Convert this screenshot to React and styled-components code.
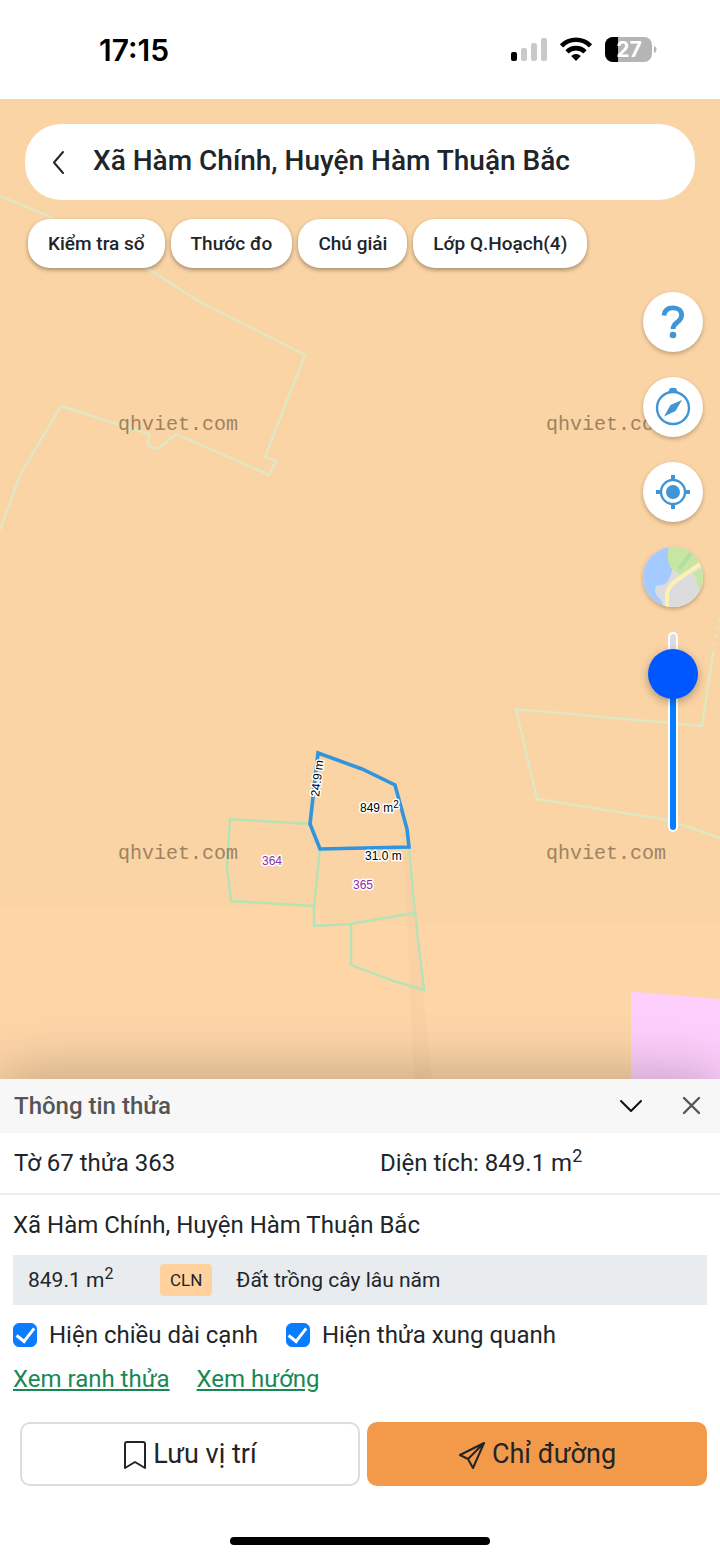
import React, { useState } from 'react';
import styled, { createGlobalStyle } from 'styled-components';

const CHIPS = ['Kiểm tra sổ', 'Thước đo', 'Chú giải', 'Lớp Q.Hoạch(4)'];

const WATERMARKS = [
	[118, 430],
	[546, 430],
	[118, 859],
	[546, 859],
];

const StatusIcons = () => (
	<svg width='148' height='28' viewBox='0 0 148 28' role='img' aria-label='Pin 27%'>
		<rect x='1' y='16' width='6' height='9' rx='2' fill='#000' />
		<rect x='11' y='12' width='6' height='13' rx='2' fill='#c9c9c9' />
		<rect x='21' y='7' width='6' height='18' rx='2' fill='#c9c9c9' />
		<rect x='31' y='2' width='6' height='23' rx='2' fill='#c9c9c9' />
		<g fill='none' stroke='#000' strokeWidth='4.6'>
			<path d='M51.5 9.800a20.500 20.500 0 0 1 29 0' />
			<path d='M57 15.800a12.800 12.800 0 0 1 18 0' />
		</g>
		<path d='M66 25l-4.800-4.900a6.800 6.800 0 0 1 9.600 0z' />
		<clipPath id='battery'>
			<rect x='95' y='1' width='47' height='25' rx='8' />
		</clipPath>
		<g clipPath='url(#battery)'>
			<rect x='95' y='1' width='47' height='25' fill='#b5b5b5' />
			<rect x='95' y='1' width='13' height='25' fill='#000' />
		</g>
		<path d='M144 10q2.600 1 2.600 3.500t-2.600 3.500z' fill='#b5b5b5' />
		<text x='119' y='21' textAnchor='middle' fontFamily='Inter, sans-serif' fontSize='21' fontWeight='700' fill='#fff'>
			27
		</text>
	</svg>
);

const ParcelMap = () => (
	<MapCanvas viewBox='0 99 720 980' preserveAspectRatio='xMidYMid slice' role='img' aria-label='Bản đồ thửa đất'>
		<rect y='99' width='720' height='980' fill='#fad4a4' />
		<path d='M0 906H320V922H720V1079H0z' fill='#fdd5a7' />
		<path d='M408 849L432 1079H414L404 849z' fill='#f6cfa2' opacity='0.7' />
		<path d='M631 991.500L720 999V1079H631z' fill='#fdcffc' />
		<g fill='none' stroke='#dfe8c4' strokeWidth='2.4'>
			<path d='M0 196L44 214L150 270L200 302L305 355L288 398L265 457L276 461L269 475L176 434L158 449L148 446L149 434L61 406L20 475L0 530' />
			<path d='M720 838L668 820L537 799L516 709L702 726L713 654' />
			<path d='M713 654L720 615' strokeDasharray='3 5' />
		</g>
		<g fill='none' stroke='#b5e3b5' strokeWidth='2.4'>
			<path d='M310 824L230 819L227 868L231 901L314 906' />
			<path d='M320 849L314 906V926L350 924L415 913L409 848' />
			<path d='M415 913L424 990L394 981L351 965V924' />
		</g>
		<path
			d='M318 753L362 769L395 785L407 829L409 847L320 849L310 824z'
			fill='none'
			stroke='#3194de'
			strokeWidth='3.6'
		/>
		{WATERMARKS.map(([x, y]) => (
			<Watermark key={`${x}-${y}`} x={x} y={y}>
				qhviet.com
			</Watermark>
		))}
		<MapLabel x='360' y='812'>
			849 m
			<tspan fontSize='10' dy='-4'>
				2
			</tspan>
		</MapLabel>
		<MapLabel x='365' y='860'>
			31.0 m
		</MapLabel>
		<MapLabel transform='translate(319 797) rotate(-83)'>24.9 m</MapLabel>
		<MapLabel x='262' y='865' $neighbour>
			364
		</MapLabel>
		<MapLabel x='353' y='889' $neighbour>
			365
		</MapLabel>
	</MapCanvas>
);

const App = () => {
	const [opacity, setOpacity] = useState(90);
	const [showEdges, setShowEdges] = useState(true);
	const [showNeighbours, setShowNeighbours] = useState(true);

	return (
		<Page>
			<GlobalStyle />
			<StatusBar>
				<Clock>17:15</Clock>
				<StatusIcons />
			</StatusBar>

			<MapArea>
				<ParcelMap />
				<SearchBar>
					<IconButton aria-label='Quay lại'>
						<svg width='20' height='28' viewBox='0 0 20 28' fill='none' stroke='#212529' strokeWidth='2'>
							<path d='M14 4L5 14.500l9 10.500' strokeLinecap='round' strokeLinejoin='round' />
						</svg>
					</IconButton>
					<Title>Xã Hàm Chính, Huyện Hàm Thuận Bắc</Title>
				</SearchBar>
				<Chips>
					{CHIPS.map((label) => (
						<Chip key={label}>{label}</Chip>
					))}
				</Chips>
				<Controls>
					<RoundButton aria-label='Trợ giúp'>
						<svg width='36' height='36' viewBox='0 0 36 36' fill='none'>
							<path
								d='M9 11.500C9.500 6 13 3.800 18 3.800c5.500 0 8.600 3 8.600 7.400 0 3.600-2 5.400-4.600 7.300-3 2.200-3.900 3.600-3.900 6.500'
								stroke='#3f95d6'
								strokeWidth='4.800'
							/>
							<circle cx='18' cy='31' r='3.300' fill='#3f95d6' />
						</svg>
					</RoundButton>
					<RoundButton aria-label='La bàn'>
						<svg width='38' height='38' viewBox='0 0 38 38'>
							<circle cx='19' cy='20' r='16' fill='none' stroke='#3f95d6' strokeWidth='2.400' />
							<path d='M14 5l1.500-4q.4-1 1.500-1h4q1.100 0 1.500 1L24 5q-5-1.500-10 0z' fill='#3f95d6' />
							<path d='M28 12L21.500 23 10 28.500 16.500 17z' fill='#3f95d6' />
						</svg>
					</RoundButton>
					<RoundButton aria-label='Vị trí của tôi'>
						<svg width='38' height='38' viewBox='0 0 38 38' fill='none' stroke='#3f95d6'>
							<circle cx='19' cy='19' r='12' strokeWidth='2.400' />
							<circle cx='19' cy='19' r='7' fill='#3f95d6' stroke='none' />
							<path d='M19 2v5M19 31v5M2 19h5M31 19h5' strokeWidth='4' />
						</svg>
					</RoundButton>
					<RoundButton aria-label='Loại bản đồ'>
						<svg width='60' height='60' viewBox='0 0 60 60'>
							<rect width='60' height='60' fill='#dcdcdc' />
							<path d='M0 0h26q-2 7 1 12 4 8 1 15-3 9-8 11-9-1-8 6 1 5 5 8 3 4 3 8H0z' fill='#a4caff' />
							<path d='M26 0h34v14L38 29q-5-5-10-8-5-8-2-21z' fill='#c5e7a1' />
							<path d='M60 20v24q-5-2-6-8t-4-9z' fill='#c5e7a1' />
							<path d='M36 22L49 5' stroke='#b4dea0' strokeWidth='4' />
							<path d='M60 15L34 33q-9 6-10 14v13' fill='none' stroke='#fdf0b3' strokeWidth='4' />
						</svg>
					</RoundButton>
					<OpacityRange
						type='range'
						aria-label='Độ mờ lớp quy hoạch'
						min='0'
						max='100'
						value={opacity}
						onChange={(e) => setOpacity(Number(e.target.value))}
						style={{ '--fill': `${opacity}%` }}
					/>
				</Controls>
			</MapArea>

			<Sheet>
				<SheetHeader>
					<SheetTitle>Thông tin thửa</SheetTitle>
					<IconButton aria-label='Thu gọn'>
						<svg width='26' height='26' viewBox='0 0 26 26' fill='none' stroke='#111' strokeWidth='2'>
							<path d='M3 8l10 10L23 8' strokeLinecap='round' strokeLinejoin='round' />
						</svg>
					</IconButton>
					<IconButton aria-label='Đóng'>
						<svg width='20' height='20' viewBox='0 0 20 20' fill='none' stroke='#555' strokeWidth='2.4'>
							<path d='M2 2l15 15M17 2L2 17' strokeLinecap='round' />
						</svg>
					</IconButton>
				</SheetHeader>
				<Summary>
					<span>Tờ 67 thửa 363</span>
					<span>
						Diện tích: 849.1 m<sup>2</sup>
					</span>
				</Summary>
				<Details>
					<Address>Xã Hàm Chính, Huyện Hàm Thuận Bắc</Address>
					<LandUse>
						<Area>
							849.1 m<sup>2</sup>
						</Area>
						<Badge>CLN</Badge>
						<span>Đất trồng cây lâu năm</span>
					</LandUse>
					<Options>
						<Option>
							<Checkbox type='checkbox' checked={showEdges} onChange={() => setShowEdges(!showEdges)} />
							Hiện chiều dài cạnh
						</Option>
						<Option>
							<Checkbox
								type='checkbox'
								checked={showNeighbours}
								onChange={() => setShowNeighbours(!showNeighbours)}
							/>
							Hiện thửa xung quanh
						</Option>
					</Options>
					<Links>
						<a href='#ranh-thua'>Xem ranh thửa</a>
						<a href='#huong'>Xem hướng</a>
					</Links>
					<Actions>
						<ActionButton>
							<svg width='24' height='30' viewBox='0 0 24 30' fill='none' stroke='#212529' strokeWidth='2'>
								<path d='M2 29V5q0-2 2-2h16q2 0 2 2v24l-10-6z' strokeLinejoin='round' />
							</svg>
							Lưu vị trí
						</ActionButton>
						<ActionButton $primary>
							<svg width='28' height='30' viewBox='0 0 28 30' fill='none' stroke='#212529' strokeWidth='2'>
								<path d='M26 4L2 16l8 4 5 9zM26 4L10 20' strokeLinejoin='round' />
							</svg>
							Chỉ đường
						</ActionButton>
					</Actions>
				</Details>
				<HomeBar />
			</Sheet>
		</Page>
	);
};

const GlobalStyle = createGlobalStyle`
	* {
		box-sizing: border-box;
	}
	body {
		margin: 0;
		background: #fff;
		color: #212529;
		font-family: Roboto, 'Noto Sans', sans-serif;
		font-size: 24px;
		line-height: 32px;
	}
	button {
		font: inherit;
		color: inherit;
		cursor: pointer;
	}
	svg {
		display: block;
		flex: none;
	}
	sup {
		font-size: 18px;
		line-height: 0;
	}
`;

const Page = styled.div`
	display: flex;
	flex-direction: column;
	min-height: 100vh;
`;

const StatusBar = styled.header`
	display: flex;
	align-items: center;
	justify-content: space-between;
	height: 99px;
	padding: 0 62px 0 99px;
	background: #fff;
`;

const Clock = styled.span`
	font-family: Inter, sans-serif;
	font-size: 30px;
	font-weight: 600;
	color: #000;
`;

const MapArea = styled.main`
	position: relative;
	display: flex;
	flex-direction: column;
	flex: 1;
	padding: 25px 25px 0;
`;

const MapCanvas = styled.svg`
	position: absolute;
	inset: 0;
	width: 100%;
	height: 100%;
`;

const Watermark = styled.text`
	font-family: 'Liberation Mono', monospace;
	font-size: 20px;
	fill: #80684c;
	opacity: 0.75;
`;

const MapLabel = styled.text`
	font-family: 'Liberation Sans', sans-serif;
	font-size: 12px;
	fill: ${({ $neighbour }) => ($neighbour ? '#8a2fa5' : '#000')};
	stroke: #fff;
	stroke-width: 3px;
	stroke-linejoin: round;
	paint-order: stroke;
`;

const IconButton = styled.button`
	display: flex;
	align-items: center;
	justify-content: center;
	padding: 0;
	border: 0;
	background: none;
`;

const SearchBar = styled.div`
	position: relative;
	display: flex;
	align-items: center;
	gap: 24px;
	height: 76px;
	padding: 0 24px;
	border-radius: 36px;
	background: #fff;
`;

const Title = styled.h1`
	margin: 0;
	padding-bottom: 2px;
	font-size: 28px;
	font-weight: 500;
	line-height: 36px;
`;

const Chips = styled.div`
	position: relative;
	display: flex;
	gap: 6px;
	margin: 19px 0 0 3px;
`;

const Chip = styled.button`
	height: 49px;
	padding: 0 20px;
	border: 0;
	border-radius: 22px;
	background: #fff;
	box-shadow: 0 2px 4px rgba(0, 0, 0, 0.35);
	font-size: 19px;
	font-weight: 500;
	line-height: 24px;
	white-space: nowrap;
`;

const Controls = styled.div`
	position: relative;
	display: flex;
	flex-direction: column;
	align-items: center;
	align-self: flex-end;
	gap: 25px;
	margin: 24px -8px 0 0;
`;

const RoundButton = styled.button`
	display: flex;
	align-items: center;
	justify-content: center;
	width: 60px;
	height: 60px;
	padding: 0;
	border: 0;
	border-radius: 50%;
	overflow: hidden;
	background: #fff;
	box-shadow: 0 2px 4px rgba(0, 0, 0, 0.25);
`;

const OpacityRange = styled.input`
	appearance: none;
	writing-mode: vertical-lr;
	direction: rtl;
	width: 50px;
	height: 200px;
	margin: 0;
	background: none;

	&::-webkit-slider-runnable-track {
		width: 10px;
		border: 2px solid #fff;
		border-radius: 5px;
		background: linear-gradient(to top, #0a7cff var(--fill), #dcdce6 var(--fill));
	}
	&::-webkit-slider-thumb {
		appearance: none;
		width: 50px;
		height: 50px;
		margin-left: -22px;
		border-radius: 50%;
		background: #0057ff;
		box-shadow: 0 3px 10px rgba(0, 0, 0, 0.3);
	}
`;

const Sheet = styled.section`
	position: relative;
	background: #fff;
	box-shadow: 0 -2px 56px rgba(0, 0, 0, 0.26);
`;

const SheetHeader = styled.div`
	display: flex;
	align-items: center;
	gap: 38px;
	height: 54px;
	padding: 0 18px 0 14px;
	background: #f7f7f7;
`;

const SheetTitle = styled.h2`
	flex: 1;
	margin: 0;
	font-size: 24px;
	font-weight: 500;
	color: #555;
`;

const Summary = styled.div`
	display: grid;
	grid-template-columns: 1fr 1fr;
	gap: 40px;
	padding: 14px;
	border-bottom: 2px solid #eee;
`;

const Details = styled.div`
	padding: 14px 13px 0;
`;

const Address = styled.div`
	margin-bottom: 14px;
`;

const LandUse = styled.div`
	display: flex;
	align-items: center;
	height: 50px;
	padding: 0 15px;
	background: #e9ecef;
	font-size: 21px;

	sup {
		font-size: 16px;
	}
`;

const Area = styled.span`
	width: 132px;
`;

const Badge = styled.span`
	margin-right: 24px;
	padding: 0 10px;
	border-radius: 4px;
	background: #ffd19c;
	font-size: 17px;
`;

const Options = styled.div`
	display: flex;
	gap: 28px;
	margin-top: 14px;
`;

const Option = styled.label`
	display: flex;
	align-items: center;
	gap: 12px;
`;

const Checkbox = styled.input`
	appearance: none;
	display: grid;
	place-items: center;
	width: 24px;
	height: 24px;
	margin: 0;
	border: 1px solid #0a7cff;
	border-radius: 6px;

	&:checked {
		background: #0a7cff;
	}
	&:checked::after {
		content: '';
		width: 8px;
		height: 15px;
		margin-bottom: 4px;
		border: solid #fff;
		border-width: 0 3px 3px 0;
		transform: rotate(38deg);
	}
`;

const Links = styled.nav`
	display: flex;
	gap: 27px;
	margin-top: 12px;

	a {
		color: #198754;
	}
`;

const Actions = styled.div`
	display: grid;
	grid-template-columns: 1fr 1fr;
	gap: 7px;
	margin: 27px 0 0 7px;
`;

const ActionButton = styled.button`
	display: flex;
	align-items: center;
	justify-content: center;
	gap: 6px;
	height: 64px;
	border: 2px solid ${({ $primary }) => ($primary ? '#f39a4a' : '#dcdcdc')};
	border-radius: 10px;
	background: ${({ $primary }) => ($primary ? '#f39a4a' : '#fff')};
	font-size: 27px;
`;

const HomeBar = styled.div`
	width: 36%;
	height: 8px;
	margin: 51px auto 15px;
	border-radius: 4px;
	background: #000;
`;

export default App;
